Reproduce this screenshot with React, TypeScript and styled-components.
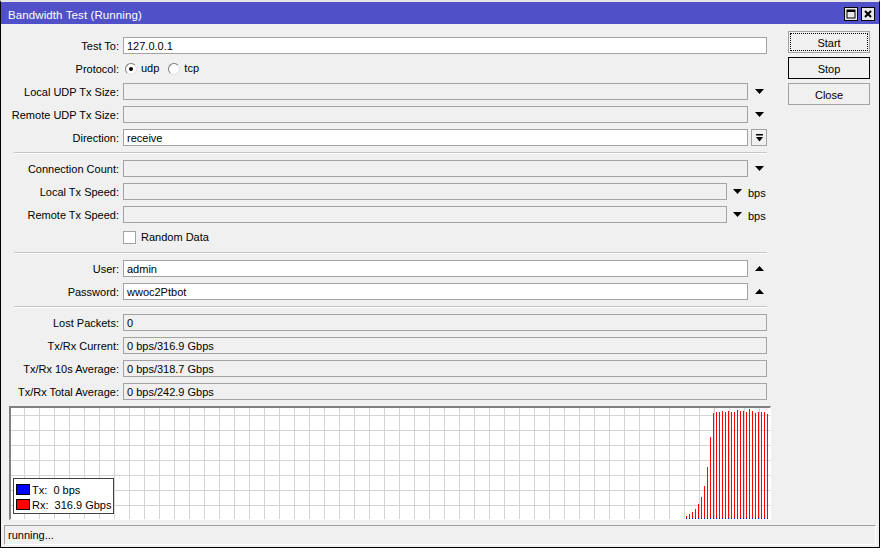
import React from 'react';
import styled, { createGlobalStyle } from 'styled-components';

const GlobalStyle = createGlobalStyle`
  body {
    margin: 0;
    background: #ffffff;
    font-family: "Liberation Sans", Arial, sans-serif;
    font-size: 11px;
    color: #000;
  }
`;

// rx bar tops in graph coordinates (page y - 408)
const rxTops = [
  516, 514, 512, 509, 504, 497, 486, 467, 437, 413, 412, 412, 411, 412, 411,
  412, 412, 410, 411, 411, 412, 409, 411, 413, 412, 412, 412, 414, 412,
].map((t) => t - 408);

const GRAPH_W = 759;
const GRAPH_H = 111;

const Down = () => (
  <svg width="9" height="5" viewBox="0 0 9 5">
    <polygon points="0,0 9,0 4.5,5" fill="#000" />
  </svg>
);

const Up = () => (
  <svg width="9" height="5" viewBox="0 0 9 5">
    <polygon points="0,5 9,5 4.5,0" fill="#000" />
  </svg>
);

type Trail = 'down' | 'up' | 'bps' | 'button' | undefined;

interface RowProps {
  label: string;
  value?: string;
  white?: boolean;
  trail?: Trail;
}

const FormRow: React.FC<RowProps> = ({ label, value, white, trail }) => (
  <>
    <Label>{label}</Label>
    <FieldCell>
      <Field $white={white}>{value}</Field>
      {trail === 'down' && (
        <ArrowSlot>
          <Down />
        </ArrowSlot>
      )}
      {trail === 'up' && (
        <ArrowSlot>
          <Up />
        </ArrowSlot>
      )}
      {trail === 'bps' && (
        <BpsSlot>
          <Down />
          <Unit>bps</Unit>
        </BpsSlot>
      )}
      {trail === 'button' && (
        <DropButton>
          <svg width="7" height="8" viewBox="0 0 7 8">
            <rect x="0" y="0" width="7" height="1.5" fill="#000" />
            <polygon points="0,3 7,3 3.5,7.5" fill="#000" />
          </svg>
        </DropButton>
      )}
    </FieldCell>
  </>
);

const Graph: React.FC = () => (
  <GraphBox>
    <svg width={GRAPH_W} height={GRAPH_H} style={{ display: 'block' }}>
      {Array.from({ length: 51 }, (_, k) => 13 + 15 * k)
        .filter((x) => x < GRAPH_W)
        .map((x) => (
          <rect key={`v${x}`} x={x} y={0} width={1} height={GRAPH_H} fill="#d4d4d4" />
        ))}
      {Array.from({ length: 8 }, (_, k) => 7 + 15 * k)
        .filter((y) => y < GRAPH_H)
        .map((y) => (
          <rect key={`h${y}`} x={0} y={y} width={GRAPH_W} height={1} fill="#d4d4d4" />
        ))}
      {rxTops.map((top, i) => {
        const x = 675 + 3 * i;
        return (
          <g key={i}>
            <rect x={x} y={top} width={1} height={110 - top} fill="#ff0000" />
            <rect x={x} y={110} width={1} height={1} fill="#0000ff" />
          </g>
        );
      })}
    </svg>
    <Legend>
      <LegendRow>
        <Swatch $color="#0000ff" />
        <span>Tx:  0 bps</span>
      </LegendRow>
      <LegendRow>
        <Swatch $color="#ff0000" />
        <span>Rx:  316.9 Gbps</span>
      </LegendRow>
    </Legend>
  </GraphBox>
);

export default function App() {
  return (
    <>
      <GlobalStyle />
      <Frame>
        <TitleBar>
          <Title>Bandwidth Test (Running)</Title>
          <TitleButtons>
            <TitleButton>
              <svg width="10" height="10" viewBox="0 0 10 10">
                <rect x="1" y="1" width="8" height="8" fill="none" stroke="#000" strokeWidth="1" />
                <rect x="1" y="1" width="8" height="2" fill="#000" />
              </svg>
            </TitleButton>
            <TitleButton>
              <svg width="10" height="10" viewBox="0 0 10 10">
                <path d="M2 2 L8 8 M8 2 L2 8" stroke="#000" strokeWidth="2" />
              </svg>
            </TitleButton>
          </TitleButtons>
        </TitleBar>

        <Body>
          <FormColumn>
            <FormGrid>
              <FormRow label="Test To:" value="127.0.0.1" white />
              <Label>Protocol:</Label>
              <RadioCell>
                <RadioOption>
                  <Radio $checked />
                  udp
                </RadioOption>
                <RadioOption>
                  <Radio />
                  tcp
                </RadioOption>
              </RadioCell>
              <FormRow label="Local UDP Tx Size:" trail="down" />
              <FormRow label="Remote UDP Tx Size:" trail="down" />
              <FormRow label="Direction:" value="receive" white trail="button" />
              <Separator />
              <FormRow label="Connection Count:" trail="down" />
              <FormRow label="Local Tx Speed:" trail="bps" />
              <FormRow label="Remote Tx Speed:" trail="bps" />
              <span />
              <CheckCell>
                <CheckBox />
                Random Data
              </CheckCell>
              <Separator />
              <FormRow label="User:" value="admin" white trail="up" />
              <FormRow label="Password:" value="wwoc2Ptbot" white trail="up" />
              <Separator />
              <FormRow label="Lost Packets:" value="0" />
              <FormRow label="Tx/Rx Current:" value="0 bps/316.9 Gbps" />
              <FormRow label="Tx/Rx 10s Average:" value="0 bps/318.7 Gbps" />
              <FormRow label="Tx/Rx Total Average:" value="0 bps/242.9 Gbps" />
            </FormGrid>
            <Graph />
          </FormColumn>

          <ButtonColumn>
            <Button $focused>Start</Button>
            <Button $default>Stop</Button>
            <Button>Close</Button>
          </ButtonColumn>
        </Body>

        <StatusBar>running...</StatusBar>
      </Frame>
    </>
  );
}

const Frame = styled.div`
  width: 880px;
  box-sizing: border-box;
  background: #f0f0f0;
  border: 1px solid #000;
  border-top: 2px solid #e6e6e6;
  padding-bottom: 2px;
  display: flex;
  flex-direction: column;
`;

const TitleBar = styled.div`
  height: 22px;
  background: #5050c8;
  display: flex;
  align-items: center;
  justify-content: space-between;
  padding: 0 4px 0 7px;
`;

const Title = styled.div`
  color: #fff;
  font-size: 11.5px;
  letter-spacing: 0.1px;
  padding-top: 3px;
`;

const TitleButtons = styled.div`
  display: flex;
  gap: 3px;
  padding-top: 2px;
`;

const TitleButton = styled.div`
  width: 14px;
  height: 14px;
  box-sizing: border-box;
  border: 1px solid #000;
  background: #e8e8e8;
  display: flex;
  align-items: center;
  justify-content: center;
`;

const Body = styled.div`
  display: flex;
  align-items: flex-start;
  padding: 7px 0 0 8px;
`;

const FormColumn = styled.div`
  width: 762px;
  padding-top: 6px;
  display: flex;
  flex-direction: column;
`;

const FormGrid = styled.div`
  width: 758px;
  display: grid;
  grid-template-columns: 111px 1fr;
  column-gap: 3px;
  row-gap: 6px;
`;

const Label = styled.div`
  text-align: right;
  padding-right: 1px;
  line-height: 19px;
  height: 17px;
  white-space: nowrap;
`;

const FieldCell = styled.div`
  display: flex;
  align-items: center;
  height: 17px;
`;

const Field = styled.div<{ $white?: boolean }>`
  flex: 1;
  height: 17px;
  box-sizing: border-box;
  border: 1px solid #a3a3a3;
  background: ${(p) => (p.$white ? '#ffffff' : '#f0f0f0')};
  padding-left: 3px;
  line-height: 17px;
  white-space: nowrap;
  overflow: hidden;
`;

const ArrowSlot = styled.div`
  width: 19px;
  flex: none;
  display: flex;
  align-items: center;
  padding-left: 7px;
  box-sizing: border-box;
  height: 17px;
`;

const BpsSlot = styled.div`
  width: 40px;
  flex: none;
  display: flex;
  align-items: center;
  padding-left: 6px;
  box-sizing: border-box;
  height: 17px;
`;

const Unit = styled.span`
  margin-left: 6px;
  padding-top: 2px;
`;

const DropButton = styled.div`
  width: 16px;
  height: 17px;
  margin-left: 3px;
  flex: none;
  box-sizing: border-box;
  border: 1px solid #a3a3a3;
  background: #f0f0f0;
  display: flex;
  align-items: center;
  justify-content: center;
`;

const Separator = styled.div`
  grid-column: 1 / -1;
  margin-left: 5px;
  height: 2px;
  box-sizing: border-box;
  border-top: 1px solid #c4c4c4;
  border-bottom: 1px solid #ffffff;
`;

const RadioCell = styled.div`
  display: flex;
  align-items: center;
  height: 17px;
  padding-left: 2px;
  gap: 9px;
`;

const RadioOption = styled.label`
  display: flex;
  align-items: center;
  gap: 4px;
  line-height: 19px;
`;

const Radio = styled.span<{ $checked?: boolean }>`
  width: 12px;
  height: 12px;
  box-sizing: border-box;
  border-radius: 50%;
  border: 1px solid;
  border-color: #7a7a7a #e0e0e0 #e0e0e0 #7a7a7a;
  background: #fff;
  display: flex;
  align-items: center;
  justify-content: center;

  &::after {
    content: '';
    width: 4px;
    height: 4px;
    border-radius: 50%;
    background: ${(p) => (p.$checked ? '#000' : 'transparent')};
  }
`;

const CheckCell = styled.label`
  display: flex;
  align-items: center;
  height: 17px;
  gap: 5px;
  line-height: 19px;
`;

const CheckBox = styled.span`
  width: 13px;
  height: 13px;
  box-sizing: border-box;
  border: 1px solid #a3a3a3;
  background: #fff;
`;

const ButtonColumn = styled.div`
  margin-left: 17px;
  width: 82px;
  display: flex;
  flex-direction: column;
  gap: 4px;
`;

const Button = styled.div<{ $focused?: boolean; $default?: boolean }>`
  position: relative;
  height: 22px;
  box-sizing: border-box;
  border: 1px solid ${(p) => (p.$default ? '#000' : '#a3a3a3')};
  background: #f0f0f0;
  display: flex;
  align-items: center;
  justify-content: center;
  padding-top: 2px;

  &::after {
    content: '';
    display: ${(p) => (p.$focused ? 'block' : 'none')};
    position: absolute;
    inset: 1px;
    border: 1px dotted #000;
  }
`;

const GraphBox = styled.div`
  position: relative;
  margin-top: 6px;
  width: 762px;
  box-sizing: border-box;
  border-top: 2px solid #808080;
  border-left: 2px solid #808080;
  border-right: 1px solid #ffffff;
  border-bottom: 1px solid #ffffff;
  background: #ffffff;
`;

const Legend = styled.div`
  position: absolute;
  left: 2px;
  top: 70px;
  width: 101px;
  height: 36px;
  box-sizing: border-box;
  border: 1px solid #404040;
  background: #fff;
  padding: 3px 0 0 2px;
`;

const LegendRow = styled.div`
  display: flex;
  align-items: center;
  height: 15px;
  gap: 2px;
  white-space: pre;
`;

const Swatch = styled.span<{ $color: string }>`
  width: 14px;
  height: 11px;
  box-sizing: border-box;
  border: 1px solid #000;
  background: ${(p) => p.$color};
`;

const StatusBar = styled.div`
  margin: 5px 3px 0 3px;
  height: 20px;
  box-sizing: border-box;
  border: 1px solid;
  border-color: #a0a0a0 #ffffff #ffffff #a0a0a0;
  padding-left: 3px;
  line-height: 19px;
`;
